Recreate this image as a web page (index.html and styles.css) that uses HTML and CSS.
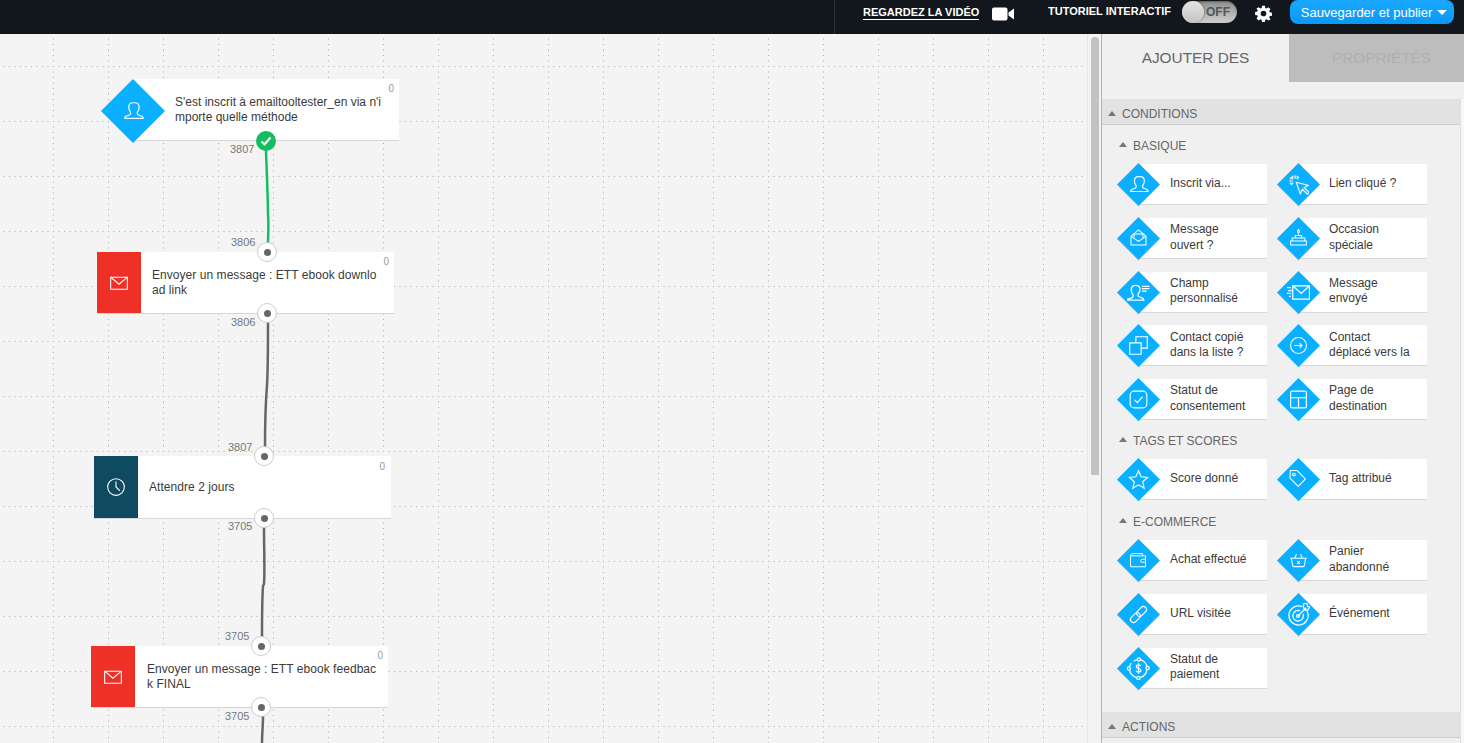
FILE: index.html
```html
<!DOCTYPE html>
<html lang="fr">
<head>
<meta charset="utf-8">
<title>Automatisation</title>
<link rel="stylesheet" href="styles.css">
</head>
<body>
<svg class="defs" width="0" height="0" aria-hidden="true">
  <defs>
    <symbol id="i-user" viewBox="0 0 24 24"><path d="M12 3c-3 0-4.700 2-4.700 5 0 2.200.8 4 2 5.200v1.600c0 .8-.4 1.200-1.200 1.500l-3.200 1.200c-1.300.5-1.900 1.200-1.900 2.500h20c0-1.300-.6-2-1.900-2.500l-3.200-1.200c-.8-.3-1.200-.7-1.200-1.500v-1.600c1.200-1.200 2-3 2-5.200 0-3-1.700-5-4.700-5z"/></symbol>
    <symbol id="i-click" viewBox="0 0 24 24"><path d="M9.500 9.500l4.500 13 2.500-5 5.500 5.500 2-2-5.500-5.500 5-2.500z"/><path d="M8 1.500v4M1.500 8h4M3.300 3.300l2.600 2.600M12.700 3.300l-2.600 2.600M3.300 12.700l2.600-2.600M5 2l.8 2M11 2l-.8 2M2 5l2 .8M2 11l2-.8"/></symbol>
    <symbol id="i-open" viewBox="0 0 24 24"><path d="M2.500 10.500v11h19v-11l-9.500-8z"/><path d="M2.500 10.500l9.500 6.500 9.500-6.500M6.500 12V7.500h11V12"/></symbol>
    <symbol id="i-cake" viewBox="0 0 24 24"><path d="M4 12.500h16v4H4zM2 16.500h20v5H2zM8 12.500V9.500h8v3M12 9.500V7"/><path d="M12 2c.9 1.200 1.200 1.900 1.200 2.600a1.200 1.200 0 0 1-2.400 0C10.800 3.900 11.100 3.200 12 2z"/></symbol>
    <symbol id="i-field" viewBox="0 0 24 24"><path d="M9 4.500c-3 0-4.600 2-4.600 4.900 0 2.200.8 3.900 2 5.100v1.500c0 .8-.4 1.100-1.100 1.400l-3 1.200C1 18.100.4 18.800.4 20h17.200c0-1.200-.6-1.900-1.900-2.400l-3-1.200c-.7-.3-1.100-.6-1.100-1.400v-1.500c1.200-1.200 2-2.900 2-5.100C13.600 6.500 12 4.500 9 4.500z"/><path d="M15.500 5.500h8M15.500 8h8M15.500 10.500h5"/></symbol>
    <symbol id="i-sent" viewBox="0 0 24 24"><path d="M6 5h17.500v14H6z"/><path d="M6 5l8.750 8 8.750-8M0 7h4M1 10h4M0 13h4M2 16h2" /></symbol>
    <symbol id="i-copy" viewBox="0 0 24 24"><path d="M2 9h13v13H2zM9 9V2h13v13h-7"/></symbol>
    <symbol id="i-move" viewBox="0 0 24 24"><circle cx="12" cy="12" r="10"/><path d="M6.500 12h10M13.500 9l3 3-3 3" /></symbol>
    <symbol id="i-check" viewBox="0 0 24 24"><rect x="2.500" y="2.500" width="19" height="19" rx="4.500"/><path d="M7.500 12.500l3.200 3.200 6-7"/></symbol>
    <symbol id="i-page" viewBox="0 0 24 24"><rect x="3" y="2.500" width="18" height="19" rx="1.500"/><path d="M3 10h18M12 10v11.500"/></symbol>
    <symbol id="i-star" viewBox="0 0 24 24"><path d="M12 2l3 6.900 7.500.7-5.700 5 1.700 7.400-6.500-3.900-6.500 3.900 1.700-7.400-5.700-5 7.500-.7z"/></symbol>
    <symbol id="i-tag" viewBox="0 0 24 24"><path d="M3 2h8.500l10.500 10.500-9 9.500L2.500 11.500z"/><circle cx="7.500" cy="7" r="1.700"/></symbol>
    <symbol id="i-wallet" viewBox="0 0 24 24"><path d="M2 6.500v14.500h20v-14.500zM2 6.500c0-1.500 1-3 2.500-3H18v3"/><path d="M22 11h-4.500a2 2 0 0 0 0 4H22"/></symbol>
    <symbol id="i-basket" viewBox="0 0 24 24"><path d="M1.500 10.500h21M3 10.500l1.500 9c.2 1 .8 1.500 1.800 1.500h11.400c1 0 1.600-.5 1.800-1.500l1.500-9M7 10.500l2.500-5M17 10.500l-2.500-5M10.300 14l3.400 3.400M13.700 14l-3.400 3.400"/></symbol>
    <symbol id="i-link" viewBox="0 0 24 24"><g transform="rotate(-45 12 12)"><rect x="0.500" y="8.500" width="13" height="7" rx="3.500"/><rect x="10.500" y="8.500" width="13" height="7" rx="3.500"/></g></symbol>
    <symbol id="i-target" viewBox="0 0 24 24"><path d="M16 3.800A10 10 0 1 0 21.200 9M13.700 8.200A5.500 5.500 0 1 0 16.800 11.500"/><circle cx="11.500" cy="13.500" r="1.500"/><path d="M11.500 13.500L20 5M17 3l1-3 3 1 .5 2.500 2.500.5-3 4-3-1z"/></symbol>
    <symbol id="i-pay" viewBox="0 0 24 24"><path d="M7 4.500A10 10 0 0 1 10.800 2.700M14.200 2.900A10 10 0 0 1 20.800 9.800M20.800 13.500A10 10 0 0 1 14 21.500M10 21.500A10 10 0 0 1 2.700 14M2.700 10A10 10 0 0 1 4.500 6.500"/><circle cx="12.500" cy="2.500" r="1.700"/><circle cx="21.500" cy="11.500" r="1.700"/><circle cx="12" cy="22" r="1.700"/><circle cx="2" cy="12" r="1.700"/><path d="M14.500 9.500c-.4-.8-1.200-1.200-2.500-1.200-1.400 0-2.300.7-2.300 1.800 0 2.400 4.800 1.400 4.800 3.800 0 1.100-1 1.900-2.500 1.900-1.300 0-2.200-.5-2.600-1.400M12 6.500v11"/></symbol>
    <symbol id="i-mail" viewBox="0 0 24 24"><path d="M2 5h20v14.500H2z"/><path d="M2 5l10 8.500L22 5"/></symbol>
    <symbol id="i-clock" viewBox="0 0 24 24"><circle cx="12" cy="12" r="10"/><path d="M12 5.500V12l4.500 4.500"/></symbol>
    <pattern id="dots" width="55" height="55" patternUnits="userSpaceOnUse" x="-2" y="32">
      <path class="grid-dots" d="M0 .5h55"/>
      <path class="grid-dots" d="M.5 0v55"/>
    </pattern>
  </defs>
</svg>

<header class="topbar">
  <div class="topbar-inner">
    <a class="video-link">REGARDEZ LA VIDÉO</a>
    <svg class="video-icon" viewBox="0 0 22 14"><rect x="0" y="0.500" width="15.500" height="13" rx="2"/><path d="M16.500 5.500L22 1.500v11l-5.500-4z"/></svg>
    <span class="tutorial">TUTORIEL INTERACTIF</span>
    <span class="toggle"><span class="knob"></span><span class="toggle-off">OFF</span></span>
    <svg class="gear" viewBox="0 0 24 24"><path fill-rule="evenodd" d="M10 1h4l.6 3.100 1.700.7L19 3l2.900 2.900-1.800 2.700.7 1.700 3.200.7v4l-3.200.6-.7 1.700 1.800 2.700L19 21.900l-2.700-1.800-1.700.7L14 24h-4l-.6-3.200-1.700-.7L5 21.900 2.100 19l1.800-2.700-.7-1.700L0 14v-4l3.200-.7.700-1.700L2.100 5 5 3l2.700 1.800 1.700-.7zM12 8a4 4 0 1 0 0 8 4 4 0 0 0 0-8z"/></svg>
    <button class="publish">Sauvegarder et publier<span class="caret"></span></button>
  </div>
</header>

<main class="workspace">
  <section class="canvas">
    <svg class="grid" aria-hidden="true"><rect width="100%" height="100%" fill="url(#dots)"/></svg>
    <svg class="wires" aria-hidden="true">
      <g transform="translate(0 -34)">
        <path class="wire wire-ok" d="M266 150C267 180 268 200 268 215C269 225 268 235 268 243"/>
        <path class="wire" d="M268 322C268 350 268 370 267 385C265 410 265 430 265 447"/>
        <path class="wire" d="M264 527C264 550 265 570 264 584L263 586C262 600 262 620 262 637"/>
        <path class="wire" d="M263 716C263 725 262 735 262 743"/>
      </g>
    </svg>

    <article class="node node-start">
      <svg class="node-diamond" viewBox="0 0 64 64"><polygon points="32,0 64,32 32,64 0,32"/><use href="#i-user" x="21" y="21" width="22" height="22"/></svg>
      <p class="node-text">S'est inscrit à emailtooltester_en via n'i mporte quelle méthode</p>
      <span class="node-count">0</span>
      <span class="port-ok"><svg viewBox="0 0 20 20"><path d="M5.500 10.500l3 3 6-7"/></svg></span>
    </article>
    <span class="count-label label-a">3807</span>

    <article class="node node-mail-1">
      <span class="node-block block-red"><svg class="ico ico-block"><use href="#i-mail"/></svg></span>
      <p class="node-text">Envoyer un message : ETT ebook downlo ad link</p>
      <span class="node-count">0</span>
      <span class="port port-top"></span><span class="port port-bottom"></span>
    </article>
    <span class="count-label label-b">3806</span>
    <span class="count-label label-c">3806</span>

    <article class="node node-wait">
      <span class="node-block block-navy"><svg class="ico ico-block"><use href="#i-clock"/></svg></span>
      <p class="node-text">Attendre 2 jours</p>
      <span class="node-count">0</span>
      <span class="port port-top"></span><span class="port port-bottom"></span>
    </article>
    <span class="count-label label-d">3807</span>
    <span class="count-label label-e">3705</span>

    <article class="node node-mail-2">
      <span class="node-block block-red"><svg class="ico ico-block"><use href="#i-mail"/></svg></span>
      <p class="node-text">Envoyer un message : ETT ebook feedbac k FINAL</p>
      <span class="node-count">0</span>
      <span class="port port-top"></span><span class="port port-bottom"></span>
    </article>
    <span class="count-label label-f">3705</span>
    <span class="count-label label-g">3705</span>
  </section>

  <div class="gutter"><div class="scroll-thumb"></div></div>

  <aside class="panel">
    <nav class="tabs">
      <div class="tab tab-active">AJOUTER DES</div>
      <div class="tab tab-idle">PROPRIÉTÉS</div>
    </nav>

    <div class="acc-wrap">
      <div class="acc">
        <h2 class="acc-head"><span class="tri"></span>CONDITIONS</h2>

        <div class="acc-body">
          <h3 class="sec-head"><span class="tri"></span>BASIQUE</h3>
          <div class="items">
            <div class="item"><svg class="dia" viewBox="0 0 43 43"><polygon points="21.500,0 43,21.500 21.500,43 0,21.500"/><use href="#i-user" x="11" y="11" width="21" height="21"/></svg><span>Inscrit via...</span></div>
            <div class="item"><svg class="dia" viewBox="0 0 43 43"><polygon points="21.500,0 43,21.500 21.500,43 0,21.500"/><use href="#i-click" x="11" y="11" width="21" height="21"/></svg><span>Lien cliqué ?</span></div>
            <div class="item"><svg class="dia" viewBox="0 0 43 43"><polygon points="21.500,0 43,21.500 21.500,43 0,21.500"/><use href="#i-open" x="12" y="11" width="19" height="19"/></svg><span>Message<br>ouvert ?</span></div>
            <div class="item"><svg class="dia" viewBox="0 0 43 43"><polygon points="21.500,0 43,21.500 21.500,43 0,21.500"/><use href="#i-cake" x="12" y="11" width="19" height="19"/></svg><span>Occasion<br>spéciale</span></div>
            <div class="item"><svg class="dia" viewBox="0 0 43 43"><polygon points="21.500,0 43,21.500 21.500,43 0,21.500"/><use href="#i-field" x="10" y="10" width="23" height="23"/></svg><span>Champ<br>personnalisé</span></div>
            <div class="item"><svg class="dia" viewBox="0 0 43 43"><polygon points="21.500,0 43,21.500 21.500,43 0,21.500"/><use href="#i-sent" x="10" y="10" width="23" height="23"/></svg><span>Message<br>envoyé</span></div>
            <div class="item"><svg class="dia" viewBox="0 0 43 43"><polygon points="21.500,0 43,21.500 21.500,43 0,21.500"/><use href="#i-copy" x="11" y="11" width="21" height="21"/></svg><span>Contact copié<br>dans la liste ?</span></div>
            <div class="item"><svg class="dia" viewBox="0 0 43 43"><polygon points="21.500,0 43,21.500 21.500,43 0,21.500"/><use href="#i-move" x="12" y="12" width="19" height="19"/></svg><span>Contact<br>déplacé vers la</span></div>
            <div class="item"><svg class="dia" viewBox="0 0 43 43"><polygon points="21.500,0 43,21.500 21.500,43 0,21.500"/><use href="#i-check" x="11" y="11" width="21" height="21"/></svg><span>Statut de<br>consentement</span></div>
            <div class="item"><svg class="dia" viewBox="0 0 43 43"><polygon points="21.500,0 43,21.500 21.500,43 0,21.500"/><use href="#i-page" x="11" y="11" width="21" height="21"/></svg><span>Page de<br>destination</span></div>
          </div>

          <h3 class="sec-head"><span class="tri"></span>TAGS ET SCORES</h3>
          <div class="items">
            <div class="item"><svg class="dia" viewBox="0 0 43 43"><polygon points="21.500,0 43,21.500 21.500,43 0,21.500"/><use href="#i-star" x="11" y="11" width="21" height="21"/></svg><span>Score donné</span></div>
            <div class="item"><svg class="dia" viewBox="0 0 43 43"><polygon points="21.500,0 43,21.500 21.500,43 0,21.500"/><use href="#i-tag" x="11" y="11" width="19" height="19"/></svg><span>Tag attribué</span></div>
          </div>

          <h3 class="sec-head sec-tall"><span class="tri"></span>E-COMMERCE</h3>
          <div class="items">
            <div class="item"><svg class="dia" viewBox="0 0 43 43"><polygon points="21.500,0 43,21.500 21.500,43 0,21.500"/><use href="#i-wallet" x="12" y="12" width="18" height="18"/></svg><span>Achat effectué</span></div>
            <div class="item"><svg class="dia" viewBox="0 0 43 43"><polygon points="21.500,0 43,21.500 21.500,43 0,21.500"/><use href="#i-basket" x="12" y="11" width="19" height="19"/></svg><span>Panier<br>abandonné</span></div>
            <div class="item"><svg class="dia" viewBox="0 0 43 43"><polygon points="21.500,0 43,21.500 21.500,43 0,21.500"/><use href="#i-link" x="11" y="11" width="21" height="21"/></svg><span>URL visitée</span></div>
            <div class="item"><svg class="dia" viewBox="0 0 43 43"><polygon points="21.500,0 43,21.500 21.500,43 0,21.500"/><use href="#i-target" x="10" y="10" width="23" height="23"/></svg><span>Événement</span></div>
            <div class="item"><svg class="dia" viewBox="0 0 43 43"><polygon points="21.500,0 43,21.500 21.500,43 0,21.500"/><use href="#i-pay" x="10" y="10" width="23" height="23"/></svg><span>Statut de<br>paiement</span></div>
          </div>
        </div>

        <h2 class="acc-head"><span class="tri"></span>ACTIONS</h2>
      </div>
    </div>
  </aside>
</main>
</body>
</html>
```
FILE: styles.css
```css
* { box-sizing: border-box; }
html, body { margin: 0; height: 743px; overflow: hidden; }
body { font-family: "Liberation Sans", Arial, sans-serif; color: #333; background: #f0f0f0; display: flex; flex-direction: column; }
.defs { position: absolute; }
.defs symbol { fill: none; stroke: #fff; stroke-width: 1.300; }

/* top bar */
.topbar { height: 34px; flex: none; background: #11171c; }
.topbar-inner { margin-left: 834px; height: 34px; border-left: 1px solid #2c3237; padding: 0 10px 10px 28px; display: flex; align-items: center; color: #fff; }
.video-link { font-size: 11px; font-weight: 700; border-bottom: 1px solid #fff; line-height: 12px; padding-bottom: 1px; margin-top: 2px; width: 116px; white-space: nowrap; }
.video-icon { width: 22px; height: 14px; margin-left: 13px; fill: #fff; margin-top: 3px; }
.tutorial { font-size: 11px; font-weight: 700; margin-left: 34px; white-space: nowrap; width: 123px; margin-top: -2px; }
.toggle { width: 55px; height: 22px; margin-left: 11px; border-radius: 11px; background: linear-gradient(#8f8f8f, #cfcfcf); display: flex; align-items: center; position: relative; box-shadow: inset 0 1px 2px rgba(0,0,0,.35); }
.knob { position: absolute; left: 0; top: 0; width: 22px; height: 22px; border-radius: 50%; background: linear-gradient(#e4e4e4, #c4c4c4); box-shadow: 1px 0 2px rgba(0,0,0,.25); }
.toggle-off { margin-left: 24px; font-size: 12px; font-weight: 700; color: #555; }
.gear { width: 17px; height: 17px; margin-left: 18px; fill: #fff; margin-top: 3px; }
.publish { width: 164px; height: 24px; margin-left: 18px; border: 0; border-radius: 8px; background: linear-gradient(#1aa8ff, #0b98f5); color: #fff; font: 13px "Liberation Sans", Arial, sans-serif; padding: 0 0 0 4px; display: flex; align-items: center; justify-content: center; }
.caret { width: 0; height: 0; border: 5px solid transparent; border-top: 5px solid #fff; border-bottom: 0; margin-left: 5px; }

/* workspace */
.workspace { flex: 1; display: flex; min-height: 0; }
.canvas { width: 1087px; flex: none; position: relative; background: #f4f4f4; overflow: hidden; }
.grid, .wires { position: absolute; left: 0; top: 0; width: 100%; height: 100%; }
.grid-dots { fill: none; stroke: #aaa; stroke-width: 1; stroke-dasharray: 1 4.500; }
.wire { fill: none; stroke: #666; stroke-width: 2.500; }
.wire-ok { stroke: #13bd60; }

/* nodes — placed freely on the canvas */
.node { position: absolute; background: #fff; border-bottom: 1px solid #d6d6d6; height: 62px; width: 297px; display: flex; align-items: center; }
.node-start { left: 133px; top: 45px; width: 266px; }
.node-mail-1 { left: 97px; top: 218px; }
.node-wait { left: 94px; top: 422px; height: 63px; }
.node-mail-2 { left: 91px; top: 612px; }
.node-diamond { position: absolute; left: -32px; top: 0; width: 64px; height: 64px; }
.node-diamond polygon, .dia polygon { fill: #0ab0ff; }
.node-block { width: 44px; height: 100%; flex: none; display: flex; align-items: center; justify-content: center; }
.block-red { background: #ee3026; }
.block-navy { background: #0f4b60; }
.ico { display: block; }
.ico-block { width: 20px; height: 20px; }
.node-text { margin: 0; font-size: 12px; line-height: 15px; letter-spacing: .05px; color: #3a3a3a; word-break: break-all; padding: 0 11px; }
.node-start .node-text { padding-left: 42px; padding-right: 11px; letter-spacing: 0; }
.node-mail-2 .node-text { padding-left: 12px; padding-right: 10px; line-height: 14.500px; }
.node-count { position: absolute; right: 5px; top: 4px; font-size: 10px; color: #999; }
.node-wait .node-count { right: 6px; top: 5px; }
.port, .port-ok { position: absolute; left: 161px; width: 20px; height: 20px; border-radius: 50%; }
.port { background: #fff; border: 1px solid #ccc; }
.port::after { content: ""; position: absolute; left: 5.500px; top: 5.500px; width: 7px; height: 7px; border-radius: 50%; background: #666; }
.port-top { top: -10px; }
.port-bottom { bottom: -10px; }
.port-ok { left: 123px; bottom: -11px; background: #13bd60; }
.port-ok svg { display: block; fill: none; stroke: #fff; stroke-width: 2.200; }
.node-mail-1 .port, .node-wait .port, .node-mail-2 .port { left: 160px; }
.count-label { position: absolute; font-size: 11px; line-height: 13px; color: #777; }
.label-a { left: 230px; top: 109px; }
.label-b { left: 231px; top: 202px; }
.label-c { left: 231px; top: 282px; }
.label-d { left: 228px; top: 407px; }
.label-e { left: 228px; top: 486px; }
.label-f { left: 225px; top: 596px; }
.label-g { left: 225px; top: 676px; }

/* canvas scrollbar */
.gutter { width: 14px; flex: none; padding: 3px 0 0 3px; border-left: 1px solid #e6e6e6; background: #f3f3f3; }
.scroll-thumb { width: 8px; height: 438px; border-radius: 4px 4px 0 0; background-color: #c2c2c2; background-image: radial-gradient(#cdcdcd .5px, transparent .7px); background-size: 4px 4px; }

/* panel */
.panel { width: 363px; flex: none; border-left: 1px solid #b4b4b4; background: #f0f0f0; }
.tabs { display: flex; height: 48px; margin-bottom: 17px; }
.tab { display: flex; align-items: center; justify-content: center; font-size: 15.400px; }
.tab-active { width: 187px; color: #666; }
.tab-idle { flex: 1; padding-left: 10px; color: #b0b0b0; background-color: #bdbdbd; background-image: radial-gradient(#c8c8c8 .5px, transparent .7px); background-size: 4px 4px; }
.acc-wrap { background: #f8f8f8; height: 644px; }
.acc { margin-right: 3px; border-right: 1px solid #ddd; background: #f0f0f0; height: 100%; }
.acc-head { margin: 0; height: 26px; padding: 5px 0 0 6px; background: #e2e2e2; border-bottom: 1px solid #ccc; font-size: 12px; font-weight: 400; color: #666; display: flex; align-items: center; }
.acc-body { height: 587px; padding: 0 32px 0 15px; }
.sec-head { margin: 0; height: 39px; padding: 2px 0 0 2px; font-size: 12px; font-weight: 400; color: #666; display: flex; align-items: center; }
.sec-tall { height: 40px; padding-top: 3px; }
.tri { width: 0; height: 0; border: 4.500px solid transparent; border-bottom: 5px solid #777; border-top: 0; margin-right: 6px; margin-top: -2px; }
.items { display: grid; grid-template-columns: 150px 150px; column-gap: 10px; row-gap: 12.750px; }
.item { position: relative; height: 41px; margin-left: 21px; background: #fff; border-bottom: 1px solid #d9d9d9; display: flex; align-items: center; padding: 0 0 .5px 32px; font-size: 12px; line-height: 15.500px; color: #3a3a3a; }
.item:nth-child(even) { padding-left: 31px; }
.dia { position: absolute; left: -21px; top: -1px; width: 43px; height: 43px; filter: drop-shadow(0 1px 0 rgba(0,0,0,.08)); }
```
